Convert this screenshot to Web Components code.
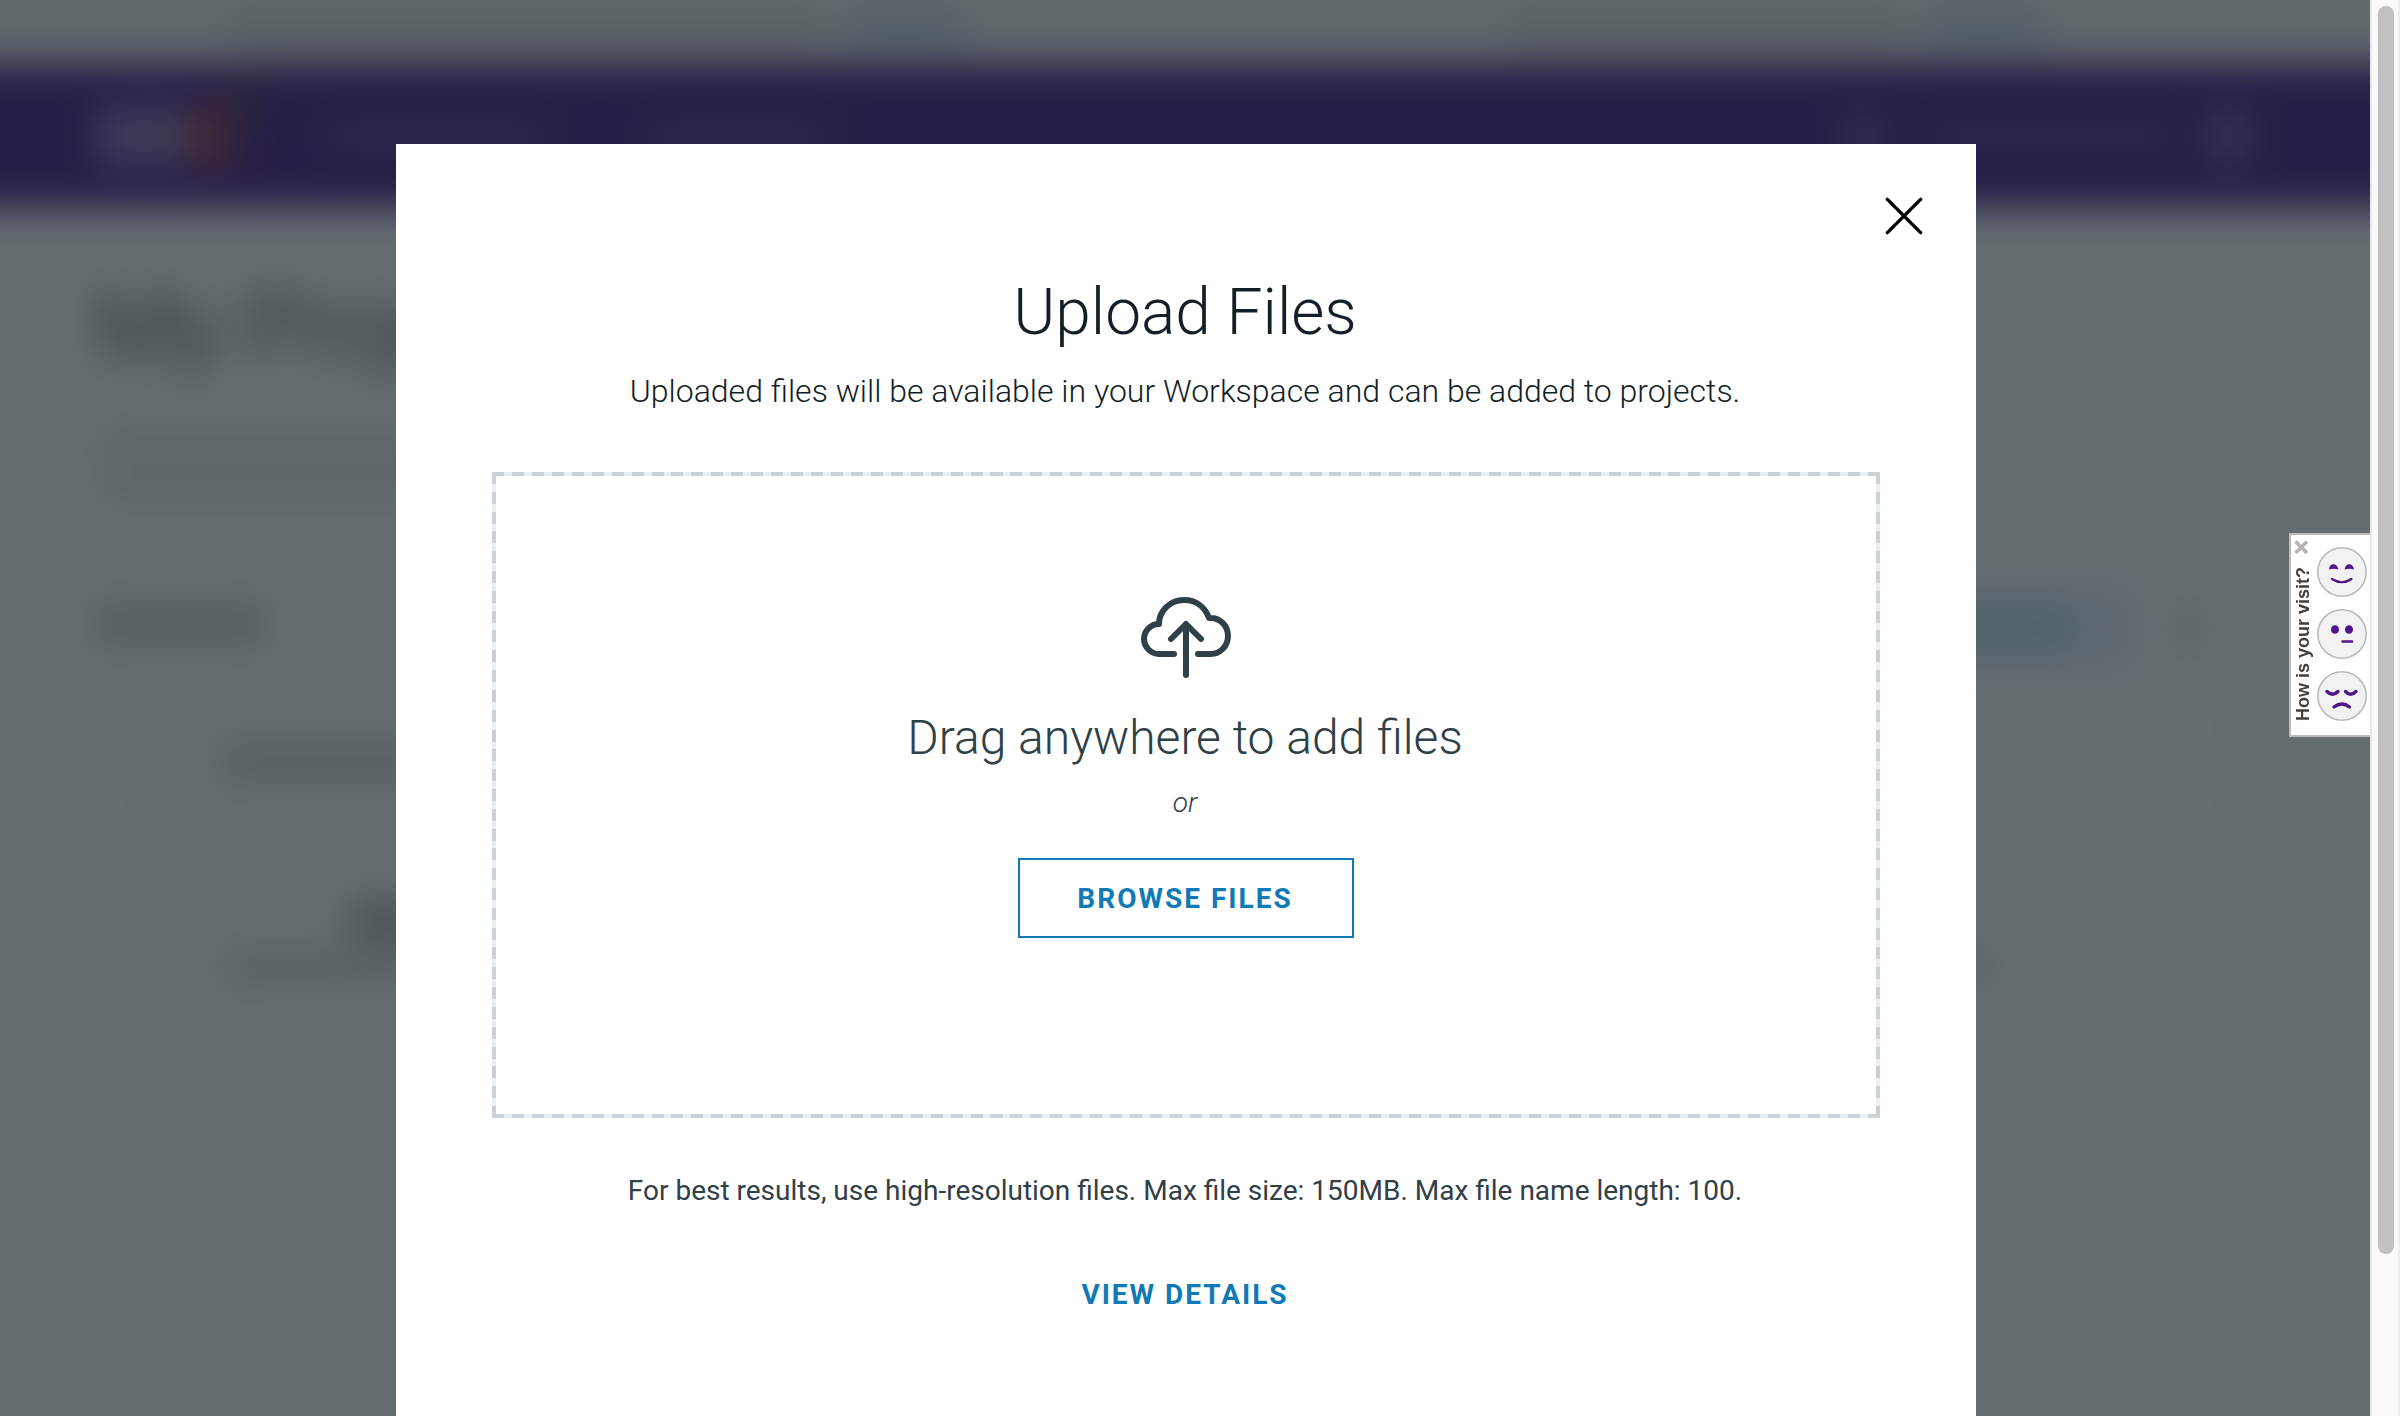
<!DOCTYPE html>
<html lang="en"><head><meta charset="utf-8"><title>Upload Files</title>
<style>
html,body{margin:0;height:100%;overflow:hidden;background:#fff}
body{font-family:Roboto,"Liberation Sans",sans-serif;color:#121f26}
</style></head><body>
<upload-screen></upload-screen>
<script>
const define=(name,html,init)=>customElements.define(name,class extends HTMLElement{
  constructor(){super();this.attachShadow({mode:'open'}).innerHTML=html;if(init)init.call(this)}
});

define('soft-bar',`<style>:host{display:block;flex:none;box-sizing:border-box}</style>`,function(){
  const s=document.createElement('style');
  s.textContent=`:host{width:${this.getAttribute('w')}px;height:${this.getAttribute('h')}px;background:${this.getAttribute('c')||'#333'};opacity:${this.getAttribute('o')||1};border-radius:${this.getAttribute('r')||0}px;margin:${this.getAttribute('m')||0}}`;
  this.shadowRoot.append(s);
});

define('site-banner',`<style>
:host{display:flex;height:164px;background:#f2f2f2;box-sizing:border-box;padding:120px 0 0 330px}
</style>
<soft-bar w="590" h="26" o=".17"></soft-bar><soft-bar w="120" h="26" c="#006a96" o=".25" m="0 0 0 25px"></soft-bar>
<soft-bar w="390" h="26" o=".17" m="0 0 0 545px"></soft-bar><soft-bar w="120" h="26" c="#006a96" o=".25" m="0 0 0 25px"></soft-bar>`);

define('site-header',`<style>
:host{display:flex;align-items:center;height:144px;background:#4d1a8c;box-sizing:border-box;padding-left:196px}
</style>
<soft-bar w="92" h="56" c="#fff" o=".4"></soft-bar><soft-bar w="46" h="66" c="#e8641a" o=".46"></soft-bar>
<soft-bar w="18" h="50" c="#2d6b2d" o=".6" m="-70px 0 0 10px"></soft-bar>
<soft-bar w="230" h="34" c="#fff" o=".13" m="0 0 0 60px"></soft-bar>
<soft-bar w="190" h="34" c="#fff" o=".13" m="0 0 0 90px"></soft-bar>
<soft-bar w="44" h="48" c="#fff" o=".24" r="20" m="0 0 0 1009px"></soft-bar>
<soft-bar w="250" h="38" c="#fff" o=".11" m="0 0 0 40px"></soft-bar>
<soft-bar w="46" h="60" c="#fff" o=".28" r="22" m="0 0 0 31px"></soft-bar>`);

/* The page runs 100px past the left, top and right edges so its blur stays even there. */
define('site-page',`<style>
:host{display:block;width:2600px;height:1616px;margin:-100px 0 0 -100px;background:#fff;overflow:hidden;filter:blur(19px)}
main{padding:67px 0 0 195px}
h1{margin:0;font:300 95px/104px Roboto,sans-serif;color:#111;height:104px}
.row{display:flex;align-items:center}
.recent{margin-top:86px;height:90px}
.action{margin-left:1475px;width:400px;height:90px;background:#e9f5fb}
.card{margin:45px 0 0 13px;width:2130px;height:95px;border:2px solid #e3e3e3;box-sizing:border-box;padding-left:110px;display:flex;align-items:center}
</style>
<site-banner></site-banner><site-header></site-header>
<main><h1>My Projects</h1>
<soft-bar w="500" h="26" o=".13" m="49px 0 0 0"></soft-bar>
<soft-bar w="500" h="26" o=".14" m="17px 0 0 0"></soft-bar>
<div class="row recent"><soft-bar w="170" h="42" o=".22" m="-8px 0 0 0"></soft-bar>
<div class="row action"><soft-bar w="240" h="30" c="#006a9e" o=".24" m="0 0 0 90px"></soft-bar></div>
<soft-bar w="16" h="44" o=".24" m="0 0 0 40px"></soft-bar></div>
<div class="card"><soft-bar w="400" h="34" o=".22" m="-8px 0 0 0"></soft-bar></div>
<soft-bar w="100" h="44" o=".36" m="86px 0 0 255px"></soft-bar>
<soft-bar w="1766" h="32" o=".18" m="8px 0 0 127px"></soft-bar>
</main>`);

define('dialog-veil',`<style>:host{display:flex;justify-content:center;position:absolute;inset:0 28px 0 0;padding-top:144px;box-sizing:border-box;background:rgba(18,30,36,.65)}</style><slot></slot>`);

define('close-button',`<style>:host{display:block;width:38px;height:38px}svg{display:block}</style>
<svg width="38" height="38" fill="none" stroke="#000" stroke-width="3.4" stroke-linecap="round"><path d="M2.400 2.400l33.200 33.200M35.600 2.400L2.400 35.600"/></svg>`);

define('cloud-upload',`<style>:host{display:block;width:90px;height:82px}svg{display:block}</style>
<svg width="90" height="82" fill="none" stroke="#2f4047" stroke-width="6" stroke-linecap="round" stroke-linejoin="round"><path d="M33 57H18C10 57 3 50 3 42C3 33.500 10 27 18 27C18 14 29 3 43 3C55 3 64 10 68 21C78 20 87 28 87 39C87 49 79 57 70 57H57M45 78V27M30 42L45 27L60 42"/></svg>`);

define('outline-button',`<style>:host{display:flex;align-items:center;justify-content:center;box-sizing:border-box;width:336px;height:80px;border:2px solid #0f7ab5;color:#0f7ab5;font:700 28px/32px Roboto,sans-serif;letter-spacing:2px;padding:1px 2px 0 0}</style><slot></slot>`);

define('drop-zone',`<style>
:host{display:flex;flex-direction:column;align-items:center;box-sizing:border-box;width:1388px;height:646px;padding-top:125px;color:#2f4047;
--d:#c9d3d7 0 12px,#e8eff1 12px 19.94px;--v:#c9d3d7 0 12px,#e8eff1 12px 19.8125px;
background:repeating-linear-gradient(90deg,var(--d)) 0 0/100% 4px no-repeat,repeating-linear-gradient(90deg,var(--d)) 0 100%/100% 4px no-repeat,repeating-linear-gradient(180deg,var(--v)) 0 0/4px 100% no-repeat,repeating-linear-gradient(180deg,var(--v)) 100% 0/4px 100% no-repeat}
h2{margin:27px 0 0;padding-right:2px;font-weight:300;font-size:48px;line-height:64px}
em{margin:17px 0 39px;padding-right:2px;font-weight:300;font-size:28px;line-height:32px}
</style>
<cloud-upload></cloud-upload><h2>Drag anywhere to add files</h2><em>or</em><outline-button>BROWSE FILES</outline-button>`);

define('upload-dialog',`<style>
:host{display:flex;flex-direction:column;align-items:center;width:1580px;height:1272px;background:#fff;box-sizing:border-box}
close-button{align-self:flex-end;margin:53px 53px 0 0}
h1{margin:40px 0 0;padding-right:2px;font-weight:300;font-size:64px;line-height:76px}
p{margin:0;padding-right:2px}
.sub{font-weight:300;font-size:32px;line-height:40px;margin:20px 0 61px}
.note{font-size:28px;line-height:36px;margin-top:55px;color:#2f4047}
.more{font-weight:700;font-size:28px;line-height:36px;letter-spacing:2px;margin-top:68px;color:#0f7ab5}
</style>
<close-button></close-button><h1>Upload Files</h1>
<p class="sub">Uploaded files will be available in your Workspace and can be added to projects.</p>
<drop-zone></drop-zone>
<p class="note">For best results, use high-resolution files. Max file size: 150MB. Max file name length: 100.</p>
<p class="more">VIEW DETAILS</p>`);

define('mood-face',`<style>:host{display:block;width:50px;height:50px}svg{display:block}</style><svg width="50" height="50"><circle cx="25" cy="25" r="24.200" fill="#f2f2f2" stroke="#bbb" stroke-width="1.600"/><g fill="none" stroke="#4d148c" stroke-linecap="round"></g></svg>`,function(){
  const g=this.shadowRoot.querySelector('g');
  g.innerHTML={
    happy:'<path d="M12 22.500C12.500 15.500 20 15.500 21.500 22.500Q17 21 12 22.500ZM27.500 22.500C28.500 15.500 36 15.500 37 22.500Q32 21 27.500 22.500Z" fill="#4d148c" stroke="none"/><path d="M15 32Q25 38.500 34.500 32" stroke-width="2.200"/>',
    neutral:'<g fill="#4d148c" stroke="none"><ellipse cx="18" cy="20.500" rx="4" ry="4.300"/><ellipse cx="32" cy="20.500" rx="4" ry="4.300"/></g><path d="M25.500 32.500H35" stroke-width="2.400"/>',
    sad:'<path d="M10 20.500Q15.500 26 21 20.500M28.500 20.500Q33.500 26 39 20.500M17 36Q25 30 32.500 36" stroke-width="3.400"/>'
  }[this.getAttribute('mood')];
});

define('visit-survey',`<style>
:host{display:flex;position:absolute;top:533px;right:30px;width:81px;height:204px;box-sizing:border-box;background:#fff;border:2px solid #bbb;border-right:0}
.label{width:26px;display:flex;flex-direction:column;align-items:center;padding-top:5px}
.label svg{display:block;margin-right:6px}
.label span{writing-mode:vertical-rl;transform:rotate(180deg);font:700 18px/22px "Liberation Sans",sans-serif;color:#3f3f3b;margin:12px 2px 0 0;white-space:nowrap}
.faces{display:flex;flex-direction:column;gap:12px;padding-top:12px}
</style>
<div class="label"><svg width="15" height="15" stroke="#b5b5b5" stroke-width="3.600"><path d="M1.500 1.500L13 13M13 1.500L1.500 13"/></svg><span>How is your visit?</span></div>
<div class="faces"><mood-face mood="happy"></mood-face><mood-face mood="neutral"></mood-face><mood-face mood="sad"></mood-face></div>`);

define('scroll-rail',`<style>
:host{display:block;position:absolute;top:0;right:0;width:30px;height:1416px;box-sizing:border-box;background:#fafafa;border-left:2px solid #e8e8e8;border-right:2px solid #ededed;padding:6px 0 0 6px}
i{display:block;width:16px;height:1248px;border-radius:8px;background:#c1c1c1}
</style><i></i>`);

define('upload-screen',`<style>:host{display:flow-root;position:relative;width:2400px;height:1416px;overflow:hidden}</style>
<site-page></site-page><dialog-veil><upload-dialog></upload-dialog></dialog-veil><visit-survey></visit-survey><scroll-rail></scroll-rail>`);
</script></body></html>
